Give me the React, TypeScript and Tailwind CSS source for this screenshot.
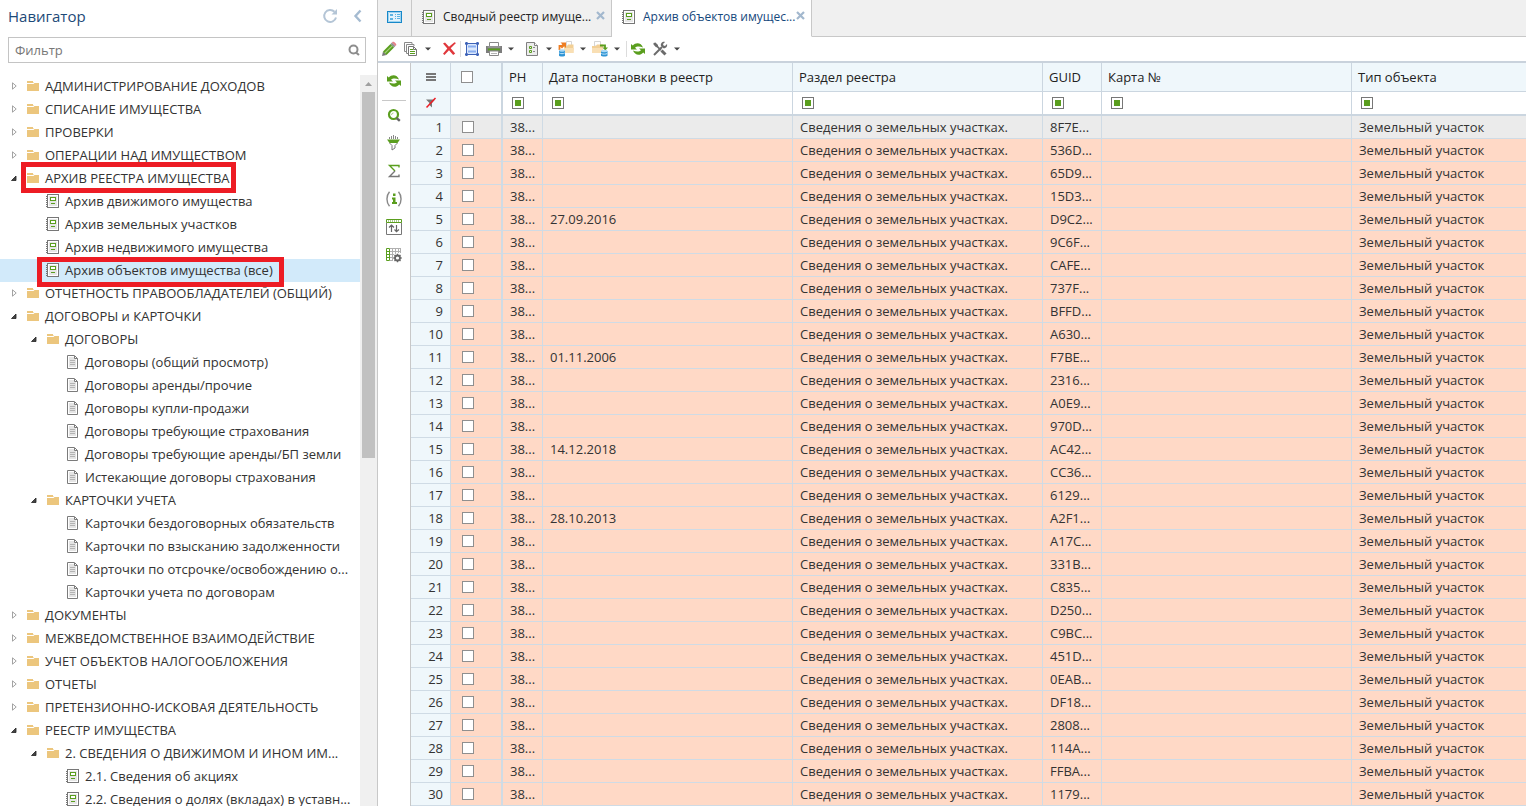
import React, { useState } from 'react';
import clsx from 'clsx';

type IconProps = { className?: string };

/* ---------- Tree and tab icons ---------- */

const FolderIcon = () => (
  <svg width="16" height="16" viewBox="0 0 16 16" className="shrink-0">
    <path d="M2 3h6v1l1 1H2z" fill="#ecc67d" />
    <path d="M2 6h6.500l1-1H14v8H2z" fill="#ecc67d" />
  </svg>
);

const RegistryIcon = ({ className }: IconProps) => (
  <svg width="16" height="16" viewBox="0 0 16 16" className={clsx('shrink-0', className)}>
    <rect x="2.500" y="1.500" width="11" height="13" fill="#fff" stroke="#777" />
    <rect x="4" y="3" width="8" height="10" fill="#e6e6e6" />
    <rect x="5.500" y="4.500" width="5" height="3" fill="#fff" stroke="#5a9e1e" />
    <path d="M6 10.500h4" stroke="#5a9e1e" />
    <path d="M1 3.500h1M1 5.500h1M1 7.500h1M1 9.500h1M1 11.500h1M1 13.500h1" stroke="#777" />
  </svg>
);

const DocIcon = () => (
  <svg width="16" height="16" viewBox="0 0 16 16" className="shrink-0">
    <path d="M2.500 1.500h7l3 3v10h-10z" fill="#fff" stroke="#7b7b7b" />
    <path d="M4 3h5l2 2v8H4z" fill="#e4e4e4" />
    <path d="M9.500 2v2.500h3" fill="none" stroke="#7b7b7b" />
    <path d="M5 6.500h5M5 8.500h5M5 10.500h5" stroke="#b3b3b3" />
  </svg>
);

const ToggleIcon = ({ open }: { open: boolean }) =>
  open ? (
    <svg width="8" height="8" viewBox="0 0 8 8">
      <path d="M6 2v4.500H1.500z" fill="#444" stroke="#222" strokeWidth="0.800" />
    </svg>
  ) : (
    <svg width="8" height="8" viewBox="0 0 8 8">
      <path d="M2.500 0.800v6.400L6.200 4z" fill="#fff" stroke="#999" strokeWidth="0.900" />
    </svg>
  );

/* ---------- Toolbar icons ---------- */

const Svg = ({ children }: { children: React.ReactNode }) => (
  <svg width="16" height="16" viewBox="0 0 16 16" fill="none">
    {children}
  </svg>
);

const PencilIcon = () => (
  <Svg>
    <path d="M1 15l1-4.500L5.500 14z" fill="#777" />
    <path d="M2 10.500L9.500 3 13 6.500 5.500 14z" fill="#5a9e1e" />
    <path d="M4 12L11.200 4.800" stroke="#a5cf7c" strokeWidth="1.200" />
    <path d="M9.500 3l1.400-1.400L14.400 5 13 6.500z" fill="#8f8f8f" />
    <path d="M10.900 1.600l.8-.8c1.200-.8 4.300 2.200 3.500 3.500l-.8.8z" fill="#e58088" />
  </Svg>
);

const CopyIcon = () => (
  <Svg>
    <path d="M3 10.500H1.500v-9H9V3" stroke="#8a8a8a" />
    <path d="M5 12.500H3.500v-9H11V5" stroke="#8a8a8a" />
    <path d="M5.500 5.500h5l3 3v6h-8z" fill="#fff" stroke="#777" />
    <path d="M10.500 5.500v3h3" stroke="#777" />
    <path d="M7 8.500h3M7 10.500h5M7 12.500h5" stroke="#5a9e1e" />
  </Svg>
);

const DeleteIcon = () => (
  <Svg>
    <path d="M2 2.500l2-1 4 4.300 5.500-4.600L15 2l-5.300 5.300 4.500 5.200-2 1.500L8 9.300 3.500 14 2 12.800l4.300-5.300z" fill="#e0383c" />
  </Svg>
);

const FrameIcon = () => (
  <Svg>
    <rect x="3" y="3" width="10" height="10" fill="#dbe8fc" />
    <path d="M2.500 1v14M13.500 1v14M1 2.500h14M1 13.500h14" stroke="#3d62b8" />
    <path d="M4 5.500h8M4 10.500h8" stroke="#8aaef0" strokeWidth="2" />
    <path d="M1 1h3v3H1zM12 1h3v3h-3zM1 12h3v3H1zM12 12h3v3h-3z" fill="#3d62b8" opacity="0.600" />
  </Svg>
);

const PrintIcon = () => (
  <Svg>
    <path d="M3.500 5V1.500h9V5" fill="#fff" stroke="#888" />
    <path d="M0 5h16v7H0z" fill="#7d7d7d" />
    <path d="M1.500 6h13" stroke="#a9a9a9" />
    <path d="M2 7.500h12v2H2z" fill="#5a9e1e" />
    <path d="M3.500 10h9v4.500h-9z" fill="#fff" stroke="#888" />
    <path d="M5 12.500h6" stroke="#b5b5b5" />
  </Svg>
);

const FormIcon = () => (
  <Svg>
    <path d="M2.500 1.500h8l3 3v10h-11z" fill="#ececec" stroke="#808080" />
    <path d="M10.500 1.500v3h3" fill="#fff" stroke="#808080" />
    <path d="M5.500 5.500h2v2h-2zM5.500 9.500h2v2h-2z" stroke="#5a9e1e" />
    <path d="M9 6.500h2M9 10.500h2" stroke="#8a8a8a" />
  </Svg>
);

const ImportIcon = () => (
  <Svg>
    <path d="M8.500.5h5V6h-5z" fill="#fff" stroke="#d5d5d5" />
    <path d="M6 5h3l1-1.500h5.500V12H6z" fill="#f2cf95" />
    <path d="M6 7h10l-1 5H6z" fill="#f9dfb4" />
    <path d="M1.500 9V5h3" stroke="#ee7d22" strokeWidth="1.800" />
    <path d="M2.500 1.500H8V7L6.200 5.200 4 7.400 2 5.500l2.300-2.200z" fill="#ee7d22" />
    <path d="M1 9.500v5c0 1.400 6 1.400 6 0v-5z" fill="#2e94d4" />
    <ellipse cx="4" cy="9.500" rx="3" ry="1.200" fill="#a9d8f5" />
    <path d="M1.300 12c1 .9 4.400.9 5.400 0" stroke="#c5e5f8" />
  </Svg>
);

const ExportIcon = () => (
  <Svg>
    <path d="M2.500.5h6V5h-6z" fill="#fff" stroke="#d5d5d5" />
    <path d="M0 5h4l1-1.500h6V12H0z" fill="#f2cf95" />
    <path d="M0 7h11v5H0z" fill="#f9dfb4" />
    <path d="M8 4.500h5V7" stroke="#5a9e1e" strokeWidth="1.800" />
    <path d="M10.500 6.500H16L13.200 9.500z" fill="#5a9e1e" />
    <path d="M9 10v4.500c0 1.400 6.500 1.400 6.500 0V10z" fill="#2e94d4" />
    <ellipse cx="12.200" cy="10" rx="3.200" ry="1.200" fill="#a9d8f5" />
    <path d="M9.300 12.500c1 .9 4.900.9 5.900 0" stroke="#c5e5f8" />
  </Svg>
);

const RefreshIcon = () => (
  <Svg>
    <path d="M1 3v5.500h6L5 6.700C6.500 5 10 5 13 6.500 11.500 2 6 .8 2.800 4.600z" fill="#5a9e1e" />
    <path d="M15 13V7.500H9l2 1.800C9.500 11 6 11 3 9.500c1.500 4.500 7 5.700 10.200 1.900z" fill="#5a9e1e" />
  </Svg>
);

const ToolsIcon = () => (
  <Svg>
    <path d="M1.500 2l2-.5L6 4v1l3.500 3.500-1.200 1.200L4.800 6.200H4L1.500 3.500z" fill="#6b6b6b" />
    <path d="M9.500 9.500l4 4" stroke="#6b6b6b" strokeWidth="3" />
    <path d="M2 14l8-8" stroke="#6b6b6b" strokeWidth="2" />
    <path d="M13 1l-2 2 .5 1.500L13 5l2-2c.8 2.500-1.500 5-4 4L9 5c-.8-2.500 1.500-4.800 4-4z" fill="#6b6b6b" />
  </Svg>
);

/* ---------- Side panel icons ---------- */

const FindIcon = () => (
  <Svg>
    <circle cx="7.500" cy="7.500" r="4.500" stroke="#5a9e1e" strokeWidth="2.200" />
    <path d="M5.500 8a2 2 0 0 1 2-2" stroke="#a9cf85" />
    <path d="M10.500 11l3.300 2.800" stroke="#666" strokeWidth="2.400" />
  </Svg>
);

const FunnelIcon = () => (
  <Svg>
    <path d="M7.500 0v4M5.500 1v3M3.500 2v2M9.500 1v3M11.500 2v2" stroke="#888" />
    <path d="M1 4.500h13L11.500 8h-8z" fill="#5a9e1e" />
    <path d="M3.500 8L6 10.500V15l3-2v-2.500L11.500 8" stroke="#777" />
  </Svg>
);

const SigmaIcon = () => (
  <Svg>
    <path d="M13 4.500v-2H3.500L9 8" stroke="#5a9e1e" strokeWidth="1.400" />
    <path d="M9 8l-5.500 5.500H13v-2" stroke="#777" strokeWidth="1.400" />
  </Svg>
);

const InfoIcon = () => (
  <Svg>
    <path d="M3.500.8c-3.400 4-3.400 10.400 0 14.400M12.500.8c3.400 4 3.400 10.400 0 14.400" stroke="#888" strokeWidth="1.400" />
    <path d="M7 2.500h2.500V5H7zM6 6.500h3.500V11H11v2H6v-2h1V8.500H6z" fill="#5a9e1e" />
  </Svg>
);

const SortIcon = () => (
  <Svg>
    <path d="M.5 3.500v12h15v-12" stroke="#777" />
    <path d="M.5.5h15v3H.5z" fill="#fff" stroke="#5a9e1e" />
    <path d="M2 2h12" stroke="#5a9e1e" strokeDasharray="1 1" />
    <path d="M5.500 13V6.500M3 8.500L5.500 6 8 8.500M10.500 6v6.500M8.500 10.500l2 2.200 2.500-2.200" stroke="#666" strokeWidth="1.200" />
  </Svg>
);

const GridGearIcon = () => (
  <Svg>
    <path d="M4 1.500h11M4 4.500h11M4 7.500h4M4 10.500h3M4 13.500h3M6.500 1v13M9.500 1v6M12.500 1v5M14.500 1v5" stroke="#b0b0b0" />
    <path d="M.5 1.500h3v12h-3zM.5 4.500h3M.5 7.500h3M.5 10.500h3" fill="#fff" stroke="#5a9e1e" />
    <circle cx="11.500" cy="11" r="4.500" fill="#fff" />
    <circle cx="11.500" cy="11" r="2.500" stroke="#666" strokeWidth="1.800" />
    <path d="M11.500 6.800v1.500M11.500 13.700v1.500M7.300 11h1.500M14.200 11h1.500M8.500 8l1 1M13.500 13l1 1M8.500 14l1-1M13.500 9l1-1" stroke="#666" strokeWidth="1.300" />
  </Svg>
);

/* ---------- Data ---------- */

type Kind = 'folder' | 'registry' | 'doc';

type TreeNode = {
  label: string;
  level: number;
  kind: Kind;
  open?: boolean;
  selected?: boolean;
  mark?: string;
};

const tree: TreeNode[] = [
  { label: 'АДМИНИСТРИРОВАНИЕ ДОХОДОВ', level: 0, kind: 'folder' },
  { label: 'СПИСАНИЕ ИМУЩЕСТВА', level: 0, kind: 'folder' },
  { label: 'ПРОВЕРКИ', level: 0, kind: 'folder' },
  { label: 'ОПЕРАЦИИ НАД ИМУЩЕСТВОМ', level: 0, kind: 'folder' },
  { label: 'АРХИВ РЕЕСТРА ИМУЩЕСТВА', level: 0, kind: 'folder', open: true, mark: '-bottom-[3px] -top-[5px] left-[21px] w-[215px]' },
  { label: 'Архив движимого имущества', level: 1, kind: 'registry' },
  { label: 'Архив земельных участков', level: 1, kind: 'registry' },
  { label: 'Архив недвижимого имущества', level: 1, kind: 'registry' },
  { label: 'Архив объектов имущества (все)', level: 1, kind: 'registry', selected: true, mark: '-bottom-[5px] -top-[2px] left-[37px] w-[247px]' },
  { label: 'ОТЧЕТНОСТЬ ПРАВООБЛАДАТЕЛЕЙ (ОБЩИЙ)', level: 0, kind: 'folder' },
  { label: 'ДОГОВОРЫ и КАРТОЧКИ', level: 0, kind: 'folder', open: true },
  { label: 'ДОГОВОРЫ', level: 1, kind: 'folder', open: true },
  { label: 'Договоры (общий просмотр)', level: 2, kind: 'doc' },
  { label: 'Договоры аренды/прочие', level: 2, kind: 'doc' },
  { label: 'Договоры купли-продажи', level: 2, kind: 'doc' },
  { label: 'Договоры требующие страхования', level: 2, kind: 'doc' },
  { label: 'Договоры требующие аренды/БП земли', level: 2, kind: 'doc' },
  { label: 'Истекающие договоры страхования', level: 2, kind: 'doc' },
  { label: 'КАРТОЧКИ УЧЕТА', level: 1, kind: 'folder', open: true },
  { label: 'Карточки бездоговорных обязательств', level: 2, kind: 'doc' },
  { label: 'Карточки по взысканию задолженности', level: 2, kind: 'doc' },
  { label: 'Карточки по отсрочке/освобождению о...', level: 2, kind: 'doc' },
  { label: 'Карточки учета по договорам', level: 2, kind: 'doc' },
  { label: 'ДОКУМЕНТЫ', level: 0, kind: 'folder' },
  { label: 'МЕЖВЕДОМСТВЕННОЕ ВЗАИМОДЕЙСТВИЕ', level: 0, kind: 'folder' },
  { label: 'УЧЕТ ОБЪЕКТОВ НАЛОГООБЛОЖЕНИЯ', level: 0, kind: 'folder' },
  { label: 'ОТЧЕТЫ', level: 0, kind: 'folder' },
  { label: 'ПРЕТЕНЗИОННО-ИСКОВАЯ ДЕЯТЕЛЬНОСТЬ', level: 0, kind: 'folder' },
  { label: 'РЕЕСТР ИМУЩЕСТВА', level: 0, kind: 'folder', open: true },
  { label: '2. СВЕДЕНИЯ О ДВИЖИМОМ И ИНОМ ИМ...', level: 1, kind: 'folder', open: true },
  { label: '2.1. Сведения об акциях', level: 2, kind: 'registry' },
  { label: '2.2. Сведения о долях (вкладах) в уставн...', level: 2, kind: 'registry' },
];

const indents = ['w-[25px]', 'w-[45px]', 'w-[65px]'];

const guids = [
  '8F7E', '536D', '65D9', '15D3', 'D9C2', '9C6F', 'CAFE', '737F', 'BFFD', 'A630',
  'F7BE', '2316', 'A0E9', '970D', 'AC42', 'CC36', '6129', 'A2F1', 'A17C', '331B',
  'C835', 'D250', 'C9BC', '451D', '0EAB', 'DF18', '2808', '114A', 'FFBA', '1179',
];

const dates: Record<number, string> = {
  5: '27.09.2016',
  11: '01.11.2006',
  15: '14.12.2018',
  18: '28.10.2013',
};

const columns = ['РН', 'Дата постановки в реестр', 'Раздел реестра', 'GUID', 'Карта №', 'Тип объекта'];

/* ---------- Navigator ---------- */

const Navigator = () => (
  <aside className="flex w-[378px] shrink-0 flex-col border-r border-[#c8c8c8] bg-white">
    <header className="flex h-[37px] items-center pb-1.5 pl-2 pr-[11px]">
      <h1 className="flex-1 text-[15px] text-[#1d4a78]">Навигатор</h1>
      <button aria-label="Обновить" className="mr-3">
        <svg width="16" height="16" viewBox="0 0 16 16" fill="none">
          <path d="M12.500 3.800A6 6 0 1 0 14 9.500" stroke="#b4c5d6" strokeWidth="2" />
          <path d="M15 1v5.500H9.500z" fill="#b4c5d6" />
        </svg>
      </button>
      <button aria-label="Свернуть">
        <svg width="16" height="16" viewBox="0 0 16 16" fill="none">
          <path d="M10.500 2.500L5.500 8l5 5.500" stroke="#a5bbd1" strokeWidth="2.400" />
        </svg>
      </button>
    </header>

    <div className="ml-2 mr-[11px] flex h-[26px] items-center border border-[#c4c4c4] pr-[3px]">
      <input
        type="text"
        aria-label="Фильтр"
        placeholder="Фильтр"
        className="min-w-0 flex-1 px-1.5 outline-none placeholder:text-[#777]"
      />
      <button aria-label="Найти">
        <svg width="16" height="16" viewBox="0 0 16 16" fill="none">
          <circle cx="7.500" cy="7.500" r="4" stroke="#8d8d8d" strokeWidth="2" />
          <path d="M10 10.500l3 2.500" stroke="#8d8d8d" strokeWidth="2.200" />
        </svg>
      </button>
    </div>

    <div className="mt-3 flex min-h-0 flex-1">
      <ul className="min-w-0 flex-1 overflow-hidden">
        {tree.map((node) => (
          <li
            key={node.label}
            className={clsx('relative flex h-[23px] items-center whitespace-nowrap pb-px', node.selected && 'bg-[#d2eafa]')}
          >
            <span className={clsx('flex shrink-0 justify-end pr-[7px]', indents[node.level])}>
              {node.kind === 'folder' && (
                <button aria-label={node.open ? 'Свернуть' : 'Развернуть'}>
                  <ToggleIcon open={!!node.open} />
                </button>
              )}
            </span>
            {node.kind === 'folder' && <FolderIcon />}
            {node.kind === 'registry' && <RegistryIcon />}
            {node.kind === 'doc' && <DocIcon />}
            <span className="ml-1">{node.label}</span>
            {node.mark && (
              <span className={clsx('pointer-events-none absolute z-10 border-[5px] border-[#ed1c24]', node.mark)} />
            )}
          </li>
        ))}
      </ul>
      {/* Scrollbar */}
      <div className="flex w-[17px] flex-col items-center bg-[#f0f0f0]">
        <svg width="17" height="17" viewBox="0 0 17 17">
          <path d="M5 11l3.500-4 3.500 4z" fill="#a0a0a0" />
        </svg>
        <div className="h-[366px] w-[13px] bg-[#c1c1c1]" />
      </div>
    </div>
  </aside>
);

/* ---------- Tabs ---------- */

const tabs = ['Сводный реестр имуще...', 'Архив объектов имущес...'];

const Tabs = () => {
  const [active, setActive] = useState(1);

  return (
    <nav className="flex h-[37px] shrink-0 bg-[#f0f0f0] text-xs">
      <button aria-label="Рабочий стол" className="flex w-[34px] items-center justify-center border-b border-r border-[#c8c8c8] pb-0.5">
        <svg width="16" height="14" viewBox="0 0 16 14" fill="none">
          <rect x="0.500" y="1.500" width="14" height="11" fill="#e3f3fc" stroke="#1788c9" />
          <path d="M1.500 2.500h12v9h-12z" stroke="#9ed3f0" />
          <path d="M3 4h3v2H3zM3 8h3v2H3z" fill="#5db4e2" />
          <path d="M8 4.500h1M10 4.500h3M8 6.500h1M10 6.500h3M8 8.500h1M10 8.500h3" stroke="#5db4e2" />
        </svg>
      </button>
      {tabs.map((tab, index) => (
        <div
          key={tab}
          className={clsx(
            'flex w-[200px] items-center border-b border-r border-[#c8c8c8] pb-0.5 pl-[9px] pr-1.5',
            index === active ? 'border-b-white bg-white text-[#15487c]' : 'text-[#222]'
          )}
        >
          <button onClick={() => setActive(index)} className="flex min-w-0 flex-1 items-center whitespace-nowrap">
            <RegistryIcon />
            <span className="ml-1.5">{tab}</span>
          </button>
          <button aria-label="Закрыть вкладку" className="mb-1">
            <svg width="9" height="9" viewBox="0 0 9 9">
              <path d="M1 1l7 7M8 1L1 8" stroke="#a3b8ce" strokeWidth="2.200" />
            </svg>
          </button>
        </div>
      ))}
      <div className="flex-1 border-b border-[#c8c8c8]" />
    </nav>
  );
};

/* ---------- Toolbar ---------- */

const Tool = ({ label, className, children }: { label: string; className?: string; children: React.ReactNode }) => (
  <button aria-label={label} className={clsx('shrink-0', className)}>
    {children}
  </button>
);

const Caret = () => (
  <button aria-label="Ещё" className="flex h-4 w-[18px] shrink-0 items-center justify-center">
    <svg width="6" height="4" viewBox="0 0 6 4">
      <path d="M0 0.500h6l-3 3z" fill="#444" />
    </svg>
  </button>
);

const Separator = ({ className }: IconProps) => (
  <span className={clsx('mr-[3px] h-4 w-px shrink-0 bg-[#dcdcdc]', className)} />
);

const Toolbar = () => (
  <div className="flex h-[26px] shrink-0 items-center border-b-2 border-[#c9d2dc] bg-white pl-[3px]">
    <Tool label="Исправить"><PencilIcon /></Tool>
    <Tool label="Размножить" className="ml-1.5"><CopyIcon /></Tool>
    <Caret />
    <Tool label="Удалить" className="ml-1"><DeleteIcon /></Tool>
    <Separator className="ml-[3px]" />
    <Tool label="Выделить все"><FrameIcon /></Tool>
    <Tool label="Печать" className="ml-1.5"><PrintIcon /></Tool>
    <Caret />
    <Tool label="Отчеты" className="ml-1"><FormIcon /></Tool>
    <Caret />
    <Tool label="Импорт"><ImportIcon /></Tool>
    <Caret />
    <Tool label="Экспорт"><ExportIcon /></Tool>
    <Caret />
    <Separator />
    <Tool label="Обновить"><RefreshIcon /></Tool>
    <Tool label="Настройка" className="ml-1.5"><ToolsIcon /></Tool>
    <Caret />
  </div>
);

const sideTools = [
  { label: 'Поиск', icon: <FindIcon /> },
  { label: 'Отбор', icon: <FunnelIcon /> },
  { label: 'Итоги', icon: <SigmaIcon /> },
  { label: 'Информация', icon: <InfoIcon /> },
  { label: 'Сортировка', icon: <SortIcon /> },
  { label: 'Настройка таблицы', icon: <GridGearIcon /> },
];

const SideBar = () => (
  <div className="flex w-[33px] shrink-0 flex-col items-center border-r border-[#c8c8c8] bg-white pt-1">
    <button aria-label="Обновить" className="flex h-7 items-center">
      <RefreshIcon />
    </button>
    <hr className="mt-[5px] w-6 border-[#c8c8c8]" />
    {sideTools.map((tool) => (
      <button key={tool.label} aria-label={tool.label} className="flex h-7 items-center">
        {tool.icon}
      </button>
    ))}
  </div>
);

/* ---------- Grid ---------- */

const Check = ({ label }: { label: string }) => (
  <input type="checkbox" aria-label={label} className="block size-3 appearance-none border border-[#8f8f8f] bg-white checked:bg-[#5a9e1e]" />
);

const FilterMark = ({ label }: { label: string }) => (
  <button aria-label={label} className="flex size-3 items-center justify-center border border-[#777] bg-white">
    <span className="size-1.5 bg-[#5a9e1e]" />
  </button>
);

const Grid = () => (
  <div className="min-w-0 flex-1 overflow-hidden">
    <table className="w-full table-fixed border-separate border-spacing-0 whitespace-nowrap">
      <colgroup>
        <col className="w-10" />
        <col className="w-[52px]" />
        <col className="w-10" />
        <col className="w-[250px]" />
        <col className="w-[250px]" />
        <col className="w-[59px]" />
        <col className="w-[250px]" />
        <col />
      </colgroup>
      <thead className="text-[#222]">
        <tr className="bg-[#eff7fb]">
          <th className="h-[29px] border-b border-r border-[#cbd6e0] p-0">
            <button aria-label="Меню" className="mx-auto block">
              <svg width="10" height="8" viewBox="0 0 10 8">
                <path d="M0 0h10v2H0zM0 3h10v2H0zM0 6h10v2H0z" fill="#777" />
              </svg>
            </button>
          </th>
          <th className="border-b border-r-2 border-[#cbd6e0] p-0 pl-2.5">
            <Check label="Выбрать все" />
          </th>
          {columns.map((column) => (
            <th key={column} className="border-b border-r border-[#cbd6e0] px-1.5 py-0 text-left font-normal last:border-r-0">
              {column}
            </th>
          ))}
        </tr>
        <tr className="bg-white">
          <td className="h-6 border-b-2 border-r border-[#cbd6e0] bg-[#eff7fb] p-0">
            <button aria-label="Сбросить фильтр" className="mx-auto block">
              <svg width="12" height="12" viewBox="0 0 12 12" fill="none">
                <path d="M1 2.500h9L7 6v4.500L4.500 8V6z" fill="#777" />
                <path d="M1.500 10.500L10.500 1" stroke="#ee1c24" strokeWidth="1.500" />
              </svg>
            </button>
          </td>
          <td className="border-b-2 border-r-2 border-[#cbd6e0] p-0" />
          {columns.map((column) => (
            <td key={column} className="border-b-2 border-r border-[#cbd6e0] p-0 pl-[9px] last:border-r-0">
              <FilterMark label={`Фильтр: ${column}`} />
            </td>
          ))}
        </tr>
      </thead>
      <tbody>
        {guids.map((guid, index) => {
          const n = index + 1;
          const cell = 'h-[23px] border-b border-r border-[#cfdbe5] py-0 px-[7px] last:border-r-0';
          return (
            <tr key={guid} className={index === 0 ? 'bg-[#ebebeb]' : 'bg-[#ffd9c6]'}>
              <td className="h-[23px] border-b border-r border-[#cfdbe5] bg-[#eff7fb] py-0 pl-0 pr-[7px] text-right">{n}</td>
              <td className="border-b border-r-2 border-[#cfdbe5] p-0 pl-[11px]">
                <Check label={`Строка ${n}`} />
              </td>
              <td className={cell}>38...</td>
              <td className={cell}>{dates[n]}</td>
              <td className={cell}>Сведения о земельных участках.</td>
              <td className={cell}>{guid}...</td>
              <td className={cell} />
              <td className={cell}>Земельный участок</td>
            </tr>
          );
        })}
      </tbody>
    </table>
  </div>
);

export default function App() {
  return (
    <div className="flex h-screen overflow-hidden bg-white font-['Open_Sans','Noto_Sans',sans-serif] text-[13px] leading-5 text-[#333]">
      <Navigator />
      <main className="flex min-w-0 flex-1 flex-col">
        <Tabs />
        <Toolbar />
        <div className="flex min-h-0 flex-1">
          <SideBar />
          <Grid />
        </div>
      </main>
    </div>
  );
}
